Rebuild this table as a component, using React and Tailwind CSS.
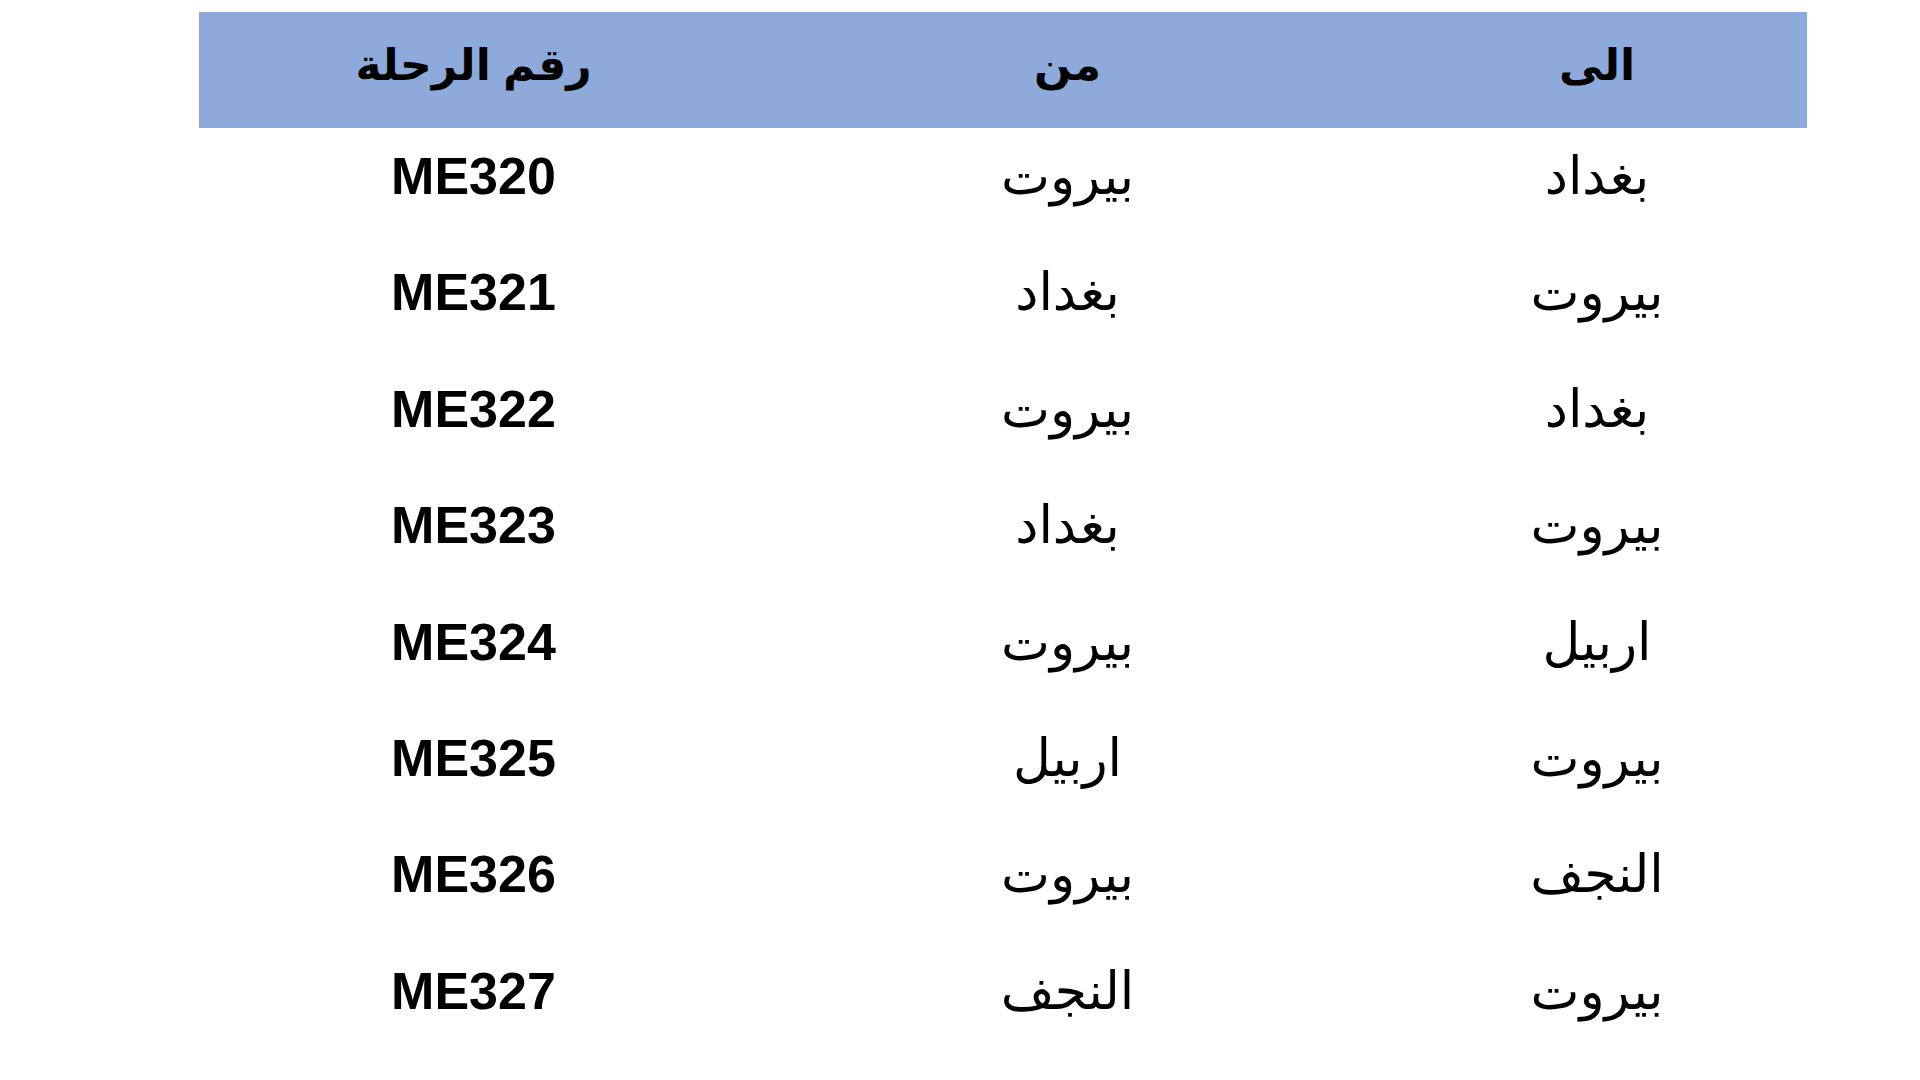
import React from "react";

const flights = [
  { to: "بغداد", from: "بيروت", no: "ME320" },
  { to: "بيروت", from: "بغداد", no: "ME321" },
  { to: "بغداد", from: "بيروت", no: "ME322" },
  { to: "بيروت", from: "بغداد", no: "ME323" },
  { to: "اربيل", from: "بيروت", no: "ME324" },
  { to: "بيروت", from: "اربيل", no: "ME325" },
  { to: "النجف", from: "بيروت", no: "ME326" },
  { to: "بيروت", from: "النجف", no: "ME327" },
];

// rtl grid: first track sits on the right
const cols = "grid grid-cols-[420px_639px_549px]";

export default function App() {
  return (
    <div className="w-[1920px] h-[1080px] bg-white overflow-hidden pt-[12px] pl-[199px] font-['Liberation_Sans','DejaVu_Sans',sans-serif] text-black">
      <div dir="rtl" className="w-[1608px]">
        {/* header */}
        <div className={`${cols} h-[116px] bg-[#8eaadb] items-center text-[44px] font-bold`}>
          <div className="text-center pb-[10px]">الى</div>
          <div className="text-center pb-[10px]">من</div>
          <div className="text-center pb-[10px]">رقم الرحلة</div>
        </div>

        {flights.map((f) => (
          <div key={f.no} className={`${cols} h-[116.4px] text-[52px] pt-[22px]`}>
            <div className="text-center leading-none">{f.to}</div>
            <div className="text-center leading-none">{f.from}</div>
            <div className="text-center leading-none font-bold" dir="ltr">
              {f.no}
            </div>
          </div>
        ))}
      </div>
    </div>
  );
}
